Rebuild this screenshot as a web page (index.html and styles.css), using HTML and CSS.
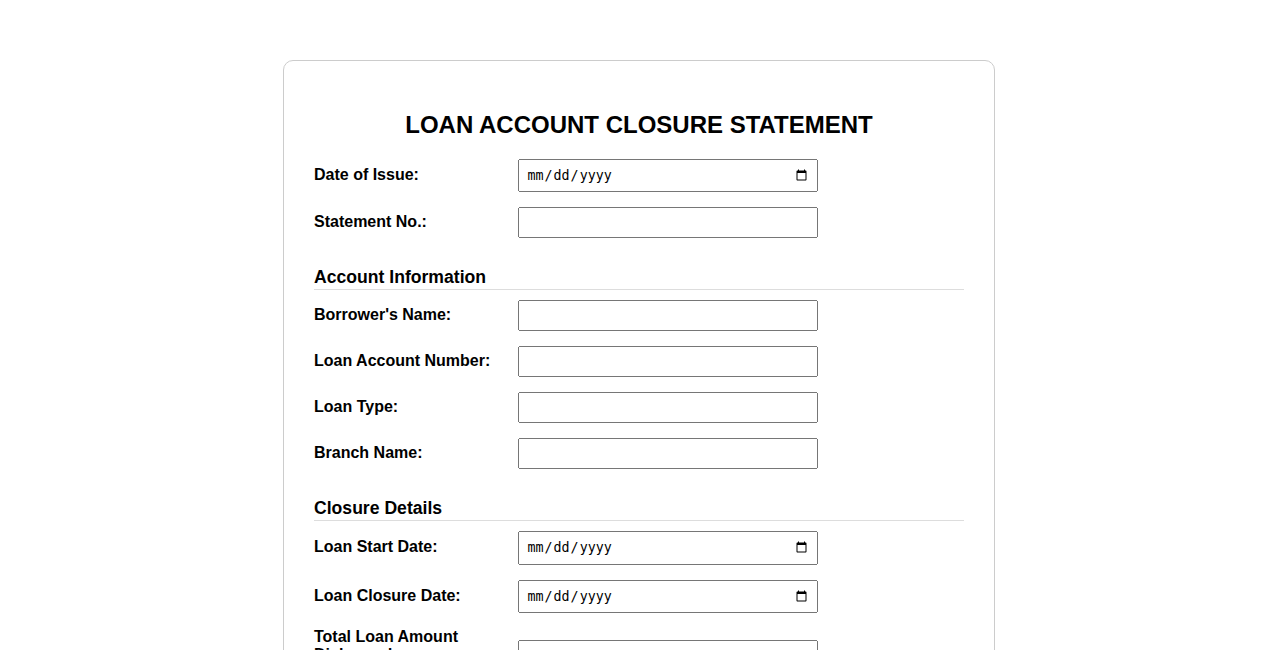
FILE: index.html
```html
<!DOCTYPE html>
<html lang="en">
<head>
<meta charset="UTF-8">
<meta name="viewport" content="width=device-width, initial-scale=1.0">
<title>Loan Account Closure Statement</title>
<link rel="stylesheet" href="styles.css">
</head>
<body>
<div class="container">
    <h2>LOAN ACCOUNT CLOSURE STATEMENT</h2>

    <div class="form-group">
        <label for="issueDate">Date of Issue:</label>
        <input type="date" id="issueDate">
    </div>
    <div class="form-group">
        <label for="statementNo">Statement No.:</label>
        <input type="text" id="statementNo">
    </div>

    <!-- Account details -->
    <h3 class="section-title">Account Information</h3>
    <div class="form-group">
        <label for="borrowerName">Borrower's Name:</label>
        <input type="text" id="borrowerName">
    </div>
    <div class="form-group">
        <label for="accountNumber">Loan Account Number:</label>
        <input type="text" id="accountNumber">
    </div>
    <div class="form-group">
        <label for="loanType">Loan Type:</label>
        <input type="text" id="loanType">
    </div>
    <div class="form-group">
        <label for="branchName">Branch Name:</label>
        <input type="text" id="branchName">
    </div>

    <!-- Closure details -->
    <h3 class="section-title">Closure Details</h3>
    <div class="form-group">
        <label for="startDate">Loan Start Date:</label>
        <input type="date" id="startDate">
    </div>
    <div class="form-group">
        <label for="closureDate">Loan Closure Date:</label>
        <input type="date" id="closureDate">
    </div>
    <div class="form-group">
        <label for="totalDisbursed">Total Loan Amount Disbursed:</label>
        <input type="text" id="totalDisbursed">
    </div>
    <div class="form-group">
        <label for="totalRepaid">Total Amount Repaid:</label>
        <input type="text" id="totalRepaid">
    </div>
    <div class="form-group">
        <label for="outstanding">Outstanding Balance:</label>
        <input type="text" id="outstanding">
    </div>
</div>
</body>
</html>
```

FILE: styles.css
```css
body {
    margin: 0;
    font-family: "Liberation Sans", Arial, sans-serif;
    color: #000;
    background-color: #fff;
}

.container {
    width: 650px;
    margin: 60px auto;
    padding: 30px;
    border: 1px solid #ccc;
    border-radius: 10px;
}

.container h2 {
    text-align: center;
    font-size: 24px;
    margin: 20px 0;
}

/*------------------ Section headings ------------------ */
.section-title {
    font-size: 1.1em;
    margin: 29px 0 10px;
    padding-bottom: 1px;
    border-bottom: 1px solid #ddd;
}

/*------------------ Form rows ------------------ */
.form-group {
    margin-bottom: 15px;
}

.form-group label {
    display: inline-block;
    width: 200px;
    font-weight: bold;
}

.form-group input {
    width: 300px;
    padding: 6px;
    box-sizing: border-box;
}
```
